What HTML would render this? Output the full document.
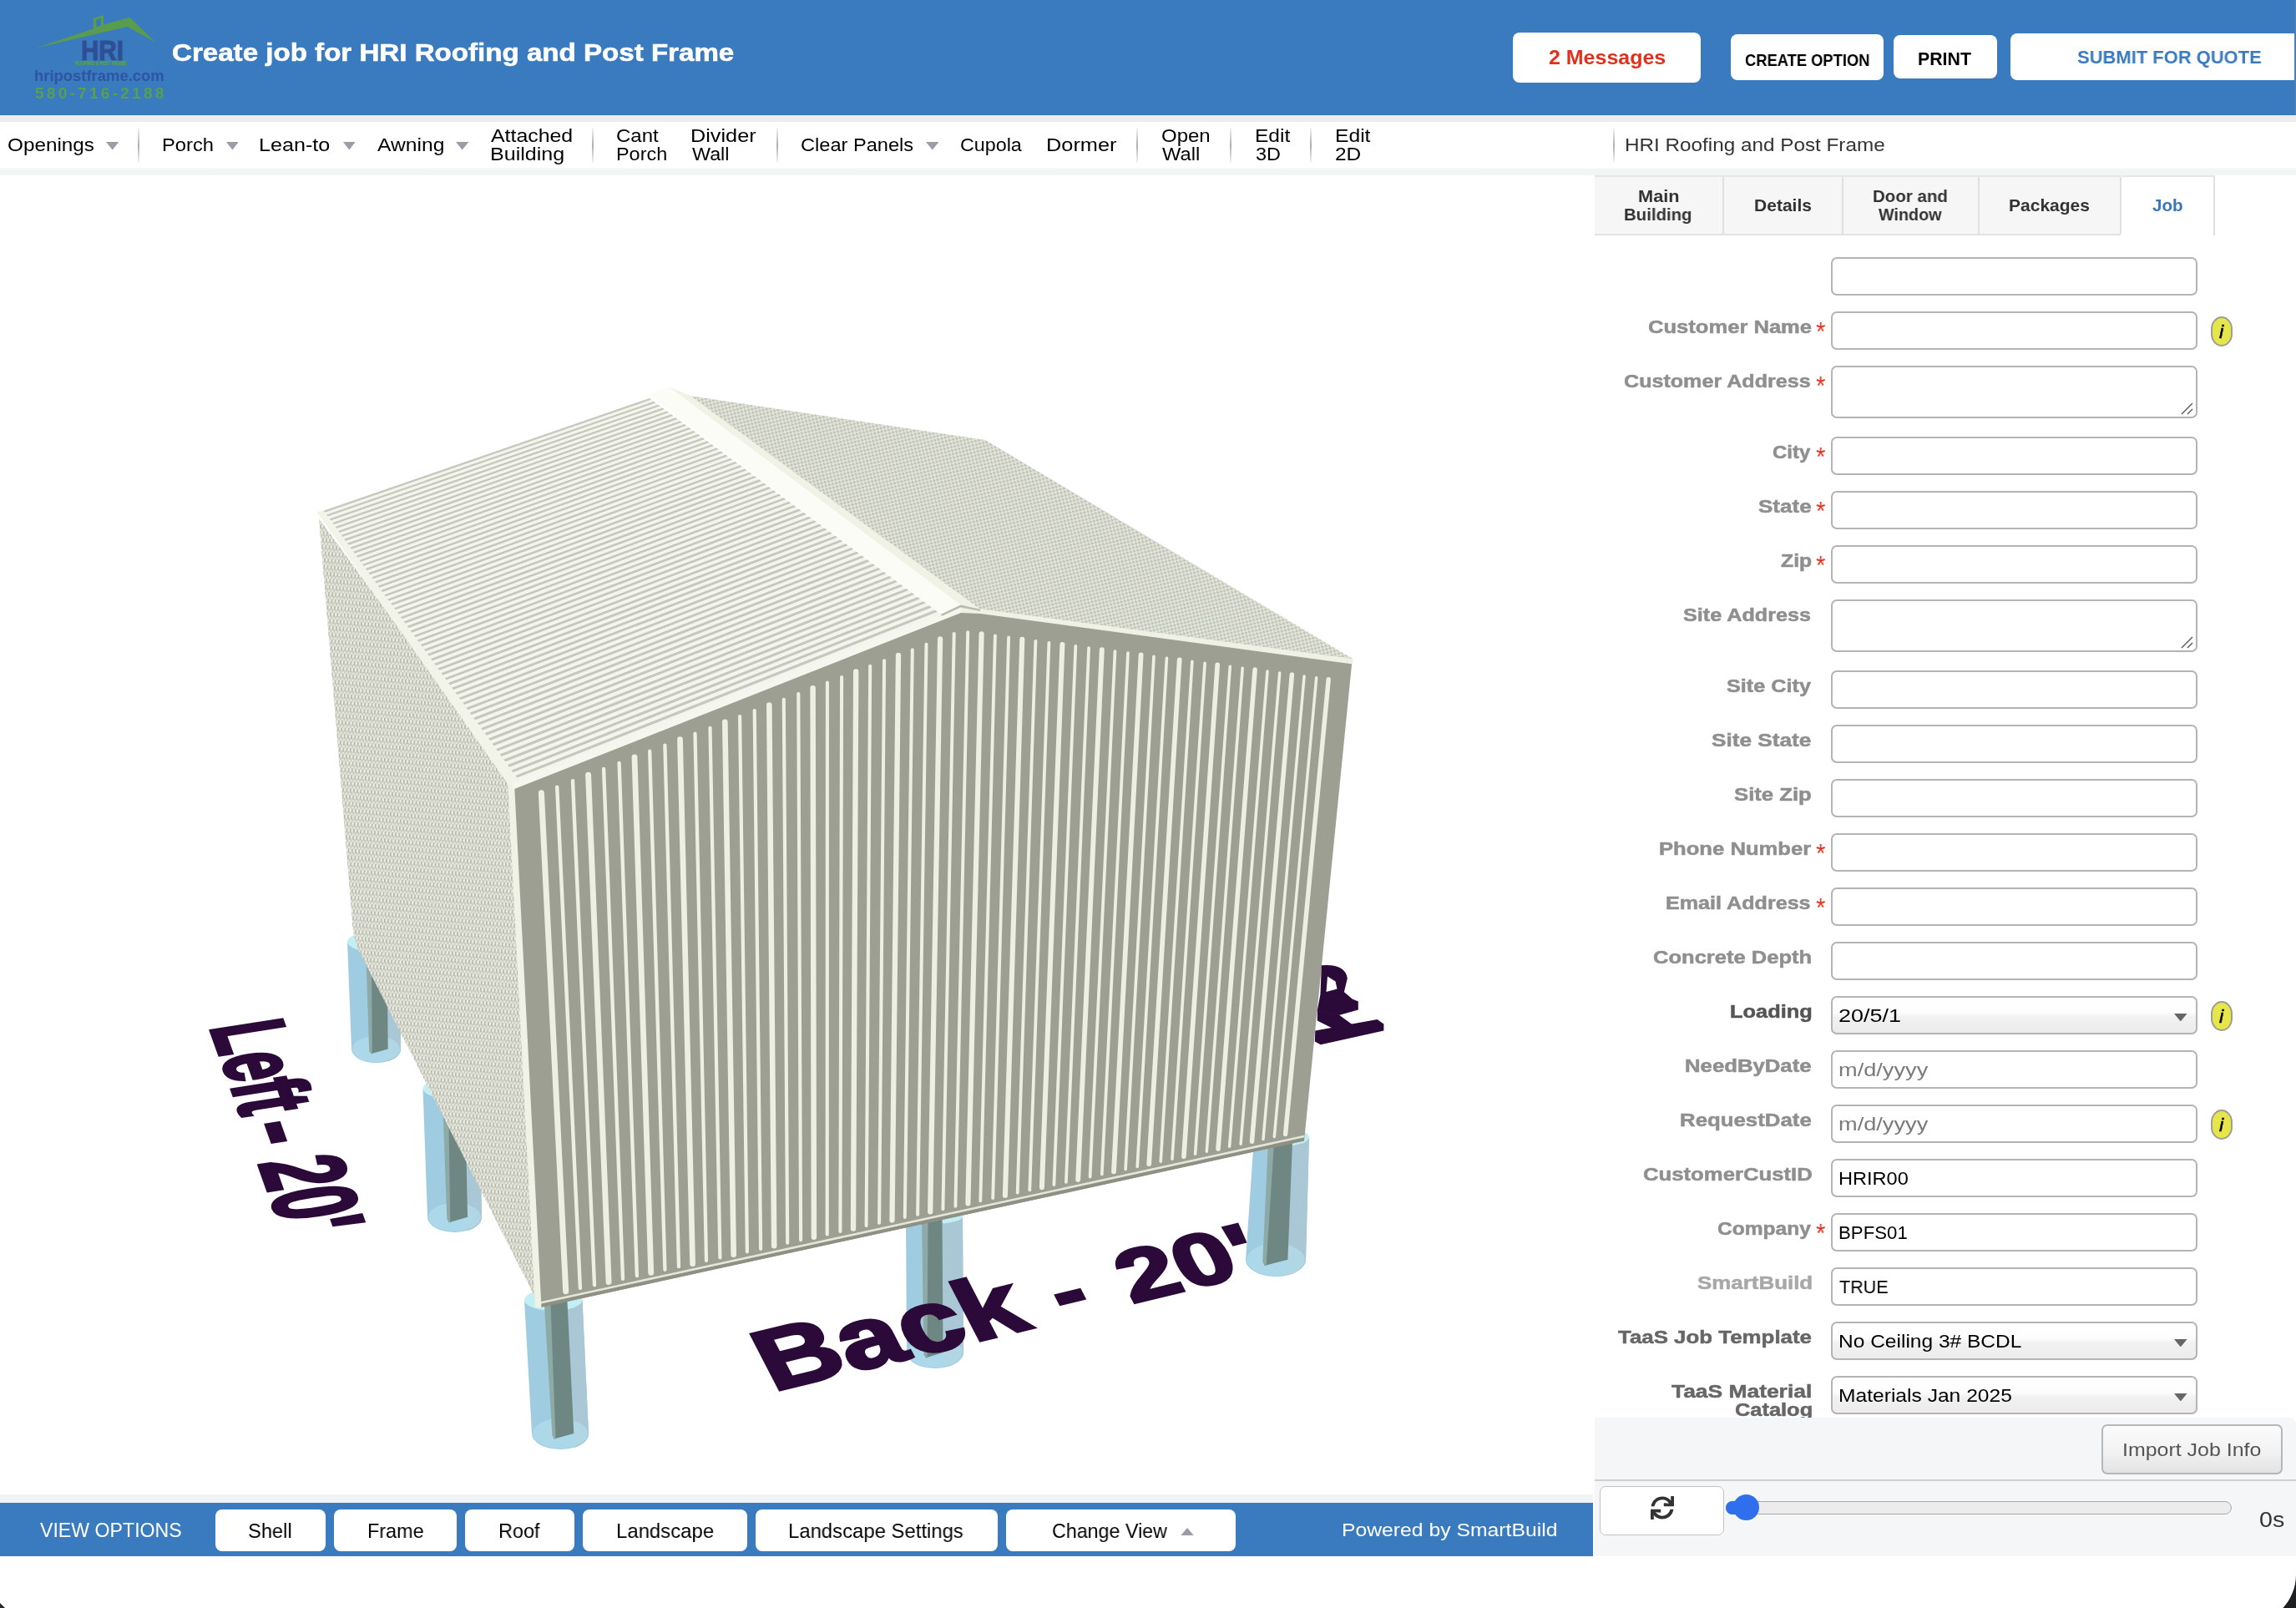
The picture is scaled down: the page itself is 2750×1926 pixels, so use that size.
<!DOCTYPE html>
<html><head><meta charset="utf-8"><title>Create job</title>
<style>
html,body{margin:0;padding:0;}
body{width:2750px;height:1926px;position:relative;overflow:hidden;background:#fff;font-family:"Liberation Sans",sans-serif;}
.t{position:absolute;white-space:pre;line-height:1;transform-origin:0 0;will-change:transform;font-family:"Liberation Sans",sans-serif;}
.inp{position:absolute;box-sizing:border-box;border:2px solid #b4b4b4;border-radius:7px;background:#fff;}
.sel{background:linear-gradient(#ffffff 0%,#fdfdfd 42%,#f1f1f1 56%,#ececec 100%);}
.btn{position:absolute;background:#fff;border-radius:8px;}
.sep{position:absolute;width:2px;top:153px;height:42px;background:linear-gradient(rgba(120,120,120,0.08),rgba(120,120,120,0.6) 50%,rgba(120,120,120,0.08));}
.info{position:absolute;box-sizing:border-box;width:26px;height:36px;border:2px solid #9e9e92;border-radius:13px/15px;background:#e6e64a;}
</style></head><body>
<div style="position:absolute;left:0px;top:0px;width:2750px;height:138px;background:#3a7abf"></div>
<div style="position:absolute;left:2748px;top:0px;width:2px;height:138px;background:#4a7fb8"></div>
<svg style="position:absolute;left:0;top:0" width="210" height="138" viewBox="0 0 210 138">
<path d="M43,57.6 L111.6,34.6 L111.6,21.8 L124,18.3 L124,29.4 L155.4,20.8 L186,50.6 L152.5,32 Z M115.2,23.4 L121,21.8 L121,30.4 L115.2,32.4 Z" fill="#5a9c4d" fill-rule="evenodd"/>
</svg>
<span class="t" style="left:96.51px;top:43.56px;font-size:33px;color:#2f4e93;font-weight:bold;-webkit-text-stroke:1px #2f4e93;transform:scaleX(0.8963);">HRI</span>
<span class="t" style="left:90.25px;top:71.87px;font-size:7.6px;color:#55a04e;font-weight:bold;-webkit-text-stroke:0.5px #55a04e;transform:scaleX(0.6483);">ROOFING &amp; POST FRAME</span>
<span class="t" style="left:41.18px;top:82.16px;font-size:18px;color:#2e55a0;font-weight:bold;transform:scaleX(1.0238);">hripostframe.com</span>
<span class="t" style="left:41.80px;top:102.56px;font-size:18px;color:#57a04e;font-weight:bold;letter-spacing:3px;transform:scaleX(1.0642);">580-716-2188</span>
<span class="t" style="left:206.20px;top:47.80px;font-size:30px;color:#fff;font-weight:bold;-webkit-text-stroke:0.6px #fff;transform:scaleX(1.1036);">Create job for HRI Roofing and Post Frame</span>
<div class="btn" style="left:1812px;top:39px;width:225px;height:60px"></div>
<span class="t" style="left:1854.80px;top:57.04px;font-size:24.4px;color:#e0301e;font-weight:bold;transform:scaleX(1.0236);">2 Messages</span>
<div class="btn" style="left:2073px;top:41px;width:183px;height:55px"></div>
<span class="t" style="left:2090.00px;top:61.77px;font-size:20px;color:#000;font-weight:bold;transform:scaleX(0.9168);">CREATE OPTION</span>
<div class="btn" style="left:2268px;top:42px;width:124px;height:52px"></div>
<span class="t" style="left:2297.40px;top:60.67px;font-size:21.3px;color:#000;font-weight:bold;">PRINT</span>
<div class="btn" style="left:2408px;top:40px;width:340px;height:56px;border-radius:8px 0 0 8px"></div>
<span class="t" style="left:2488.40px;top:57.53px;font-size:22.4px;color:#3a7abf;font-weight:bold;transform:scaleX(0.9804);">SUBMIT FOR QUOTE</span>
<div style="position:absolute;left:0px;top:138px;width:2750px;height:8px;background:#ededed"></div>
<div style="position:absolute;left:0px;top:146px;width:2750px;height:56px;background:#fff"></div>
<div style="position:absolute;left:0px;top:201px;width:2750px;height:9px;background:linear-gradient(#fbfbfb,#f3f4f4 25%,#f3f4f4)"></div>
<span class="t" style="left:8.90px;top:163.17px;font-size:22px;color:#000;transform:scaleX(1.1033);">Openings</span>
<svg style="position:absolute;left:127.4px;top:170.2px" width="15.3" height="9.6"><polygon points="0,0 15.3,0 7.65,9.6" fill="#9a9ca6"/></svg>
<span class="t" style="left:193.92px;top:163.17px;font-size:22px;color:#000;transform:scaleX(1.0790);">Porch</span>
<svg style="position:absolute;left:270.7px;top:170.2px" width="14.7" height="9.6"><polygon points="0,0 14.7,0 7.35,9.6" fill="#9a9ca6"/></svg>
<span class="t" style="left:310.46px;top:163.17px;font-size:22px;color:#000;transform:scaleX(1.1420);">Lean-to</span>
<svg style="position:absolute;left:410.7px;top:170.2px" width="14.6" height="9.6"><polygon points="0,0 14.6,0 7.3,9.6" fill="#9a9ca6"/></svg>
<span class="t" style="left:451.50px;top:163.17px;font-size:22px;color:#000;transform:scaleX(1.1202);">Awning</span>
<svg style="position:absolute;left:545.7px;top:170.2px" width="15.3" height="9.6"><polygon points="0,0 15.3,0 7.65,9.6" fill="#9a9ca6"/></svg>
<span class="t" style="left:587.80px;top:151.87px;font-size:22px;color:#000;transform:scaleX(1.1296);">Attached</span>
<span class="t" style="left:586.66px;top:174.37px;font-size:22px;color:#000;transform:scaleX(1.1401);">Building</span>
<span class="t" style="left:738.41px;top:151.87px;font-size:22px;color:#000;transform:scaleX(1.0913);">Cant</span>
<span class="t" style="left:738.44px;top:174.37px;font-size:22px;color:#000;transform:scaleX(1.0645);">Porch</span>
<span class="t" style="left:827.35px;top:151.87px;font-size:22px;color:#000;transform:scaleX(1.1485);">Divider</span>
<span class="t" style="left:828.50px;top:174.37px;font-size:22px;color:#000;transform:scaleX(1.0591);">Wall</span>
<span class="t" style="left:958.83px;top:163.17px;font-size:22px;color:#000;transform:scaleX(1.0732);">Clear Panels</span>
<svg style="position:absolute;left:1109px;top:170.2px" width="15.5" height="9.6"><polygon points="0,0 15.5,0 7.75,9.6" fill="#9a9ca6"/></svg>
<span class="t" style="left:1149.94px;top:163.17px;font-size:22px;color:#000;transform:scaleX(1.0578);">Cupola</span>
<span class="t" style="left:1253.25px;top:163.17px;font-size:22px;color:#000;transform:scaleX(1.1512);">Dormer</span>
<span class="t" style="left:1390.71px;top:151.87px;font-size:22px;color:#000;transform:scaleX(1.0895);">Open</span>
<span class="t" style="left:1391.80px;top:174.37px;font-size:22px;color:#000;transform:scaleX(1.0762);">Wall</span>
<span class="t" style="left:1502.89px;top:151.87px;font-size:22px;color:#000;transform:scaleX(1.1142);">Edit</span>
<span class="t" style="left:1504.00px;top:174.37px;font-size:22px;color:#000;transform:scaleX(1.0648);">3D</span>
<span class="t" style="left:1598.68px;top:151.87px;font-size:22px;color:#000;transform:scaleX(1.1197);">Edit</span>
<span class="t" style="left:1598.69px;top:174.37px;font-size:22px;color:#000;transform:scaleX(1.1130);">2D</span>
<div class="sep" style="left:165px"></div>
<div class="sep" style="left:709px"></div>
<div class="sep" style="left:930px"></div>
<div class="sep" style="left:1361px"></div>
<div class="sep" style="left:1473px"></div>
<div class="sep" style="left:1569px"></div>
<div class="sep" style="left:1932px"></div>
<span class="t" style="left:1945.60px;top:163.17px;font-size:22px;color:#333;transform:scaleX(1.1034);">HRI Roofing and Post Frame</span>
<svg style="position:absolute;left:0;top:210px" width="1908" height="1580" viewBox="0 210 1908 1580">
<defs>
<pattern id="pRoofR" width="6" height="6" patternUnits="userSpaceOnUse" patternTransform="rotate(31)"><rect width="6" height="6" fill="#e1e4d9"/><rect x="0" y="0" width="3" height="2.4" fill="#bfc2b5"/><rect x="3" y="3" width="3" height="2.4" fill="#bfc2b5"/></pattern>
<pattern id="pWallL" width="4.2" height="8" patternUnits="userSpaceOnUse" patternTransform="rotate(5)"><rect width="4.2" height="8" fill="#e7e8de"/><rect x="0" y="0" width="1.5" height="5.4" fill="#b4b6a9"/><rect x="2.1" y="4" width="1.4" height="4" fill="#c0c2b5"/></pattern>
</defs>
<path d="M416.0,1128.0 L421.0,1256.5 A29.5,16.5 0 0 0 480.0,1256.5 L480.0,1128.0 Z" fill="#a0cce2"/>
<path d="M463.4,1128.0 L464.7,1271.3 A29.5,16.5 0 0 0 480.0,1256.5 L480.0,1128.0 Z" fill="#aac7d5"/>
<ellipse cx="450.5" cy="1256.5" rx="28.5" ry="15.5" fill="#b6e2f0" opacity="0.55"/>
<ellipse cx="448.5" cy="1128.0" rx="32.5" ry="12.0" fill="#c2eff3"/>
<polygon points="439.0,1128.0 444.0,1262.3 464.7,1256.5 463.4,1128.0" fill="#6f8783"/>
<polygon points="437.8,1128.0 442.2,1259.0 445.8,1263.1 444.8,1128.0" fill="#8eaaa6"/>
<path d="M506.5,1304.0 L512.0,1457.8 A32.5,18.2 0 0 0 577.0,1457.8 L574.0,1304.0 Z" fill="#a0cce2"/>
<path d="M556.5,1304.0 L560.1,1474.2 A32.5,18.2 0 0 0 577.0,1457.8 L574.0,1304.0 Z" fill="#aac7d5"/>
<ellipse cx="544.5" cy="1457.8" rx="31.5" ry="17.2" fill="#b6e2f0" opacity="0.55"/>
<ellipse cx="540.2" cy="1304.0" rx="33.8" ry="12.0" fill="#c2eff3"/>
<polygon points="530.8,1304.0 537.4,1464.2 560.1,1457.8 556.5,1304.0" fill="#6f8783"/>
<polygon points="529.5,1304.0 535.4,1460.5 539.3,1465.1 536.9,1304.0" fill="#8eaaa6"/>
<path d="M628.0,1557.0 L637.0,1717.0 A34.0,19.0 0 0 0 705.0,1717.0 L697.5,1557.0 Z" fill="#a0cce2"/>
<path d="M679.4,1557.0 L687.3,1734.1 A34.0,19.0 0 0 0 705.0,1717.0 L697.5,1557.0 Z" fill="#aac7d5"/>
<ellipse cx="671.0" cy="1717.0" rx="33.0" ry="18.0" fill="#b6e2f0" opacity="0.55"/>
<ellipse cx="662.7" cy="1557.0" rx="34.7" ry="13.0" fill="#c2eff3"/>
<polygon points="653.0,1557.0 663.5,1723.6 687.3,1717.0 679.4,1557.0" fill="#6f8783"/>
<polygon points="651.6,1557.0 661.5,1719.8 665.6,1724.6 659.3,1557.0" fill="#8eaaa6"/>
<path d="M1085.0,1457.0 L1086.0,1620.0 A34.0,19.0 0 0 0 1154.0,1620.0 L1153.0,1457.0 Z" fill="#a0cce2"/>
<path d="M1128.5,1457.0 L1129.5,1637.1 A34.0,19.0 0 0 0 1154.0,1620.0 L1153.0,1457.0 Z" fill="#aac7d5"/>
<ellipse cx="1120.0" cy="1620.0" rx="33.0" ry="18.0" fill="#b6e2f0" opacity="0.55"/>
<ellipse cx="1119.0" cy="1457.0" rx="34.0" ry="9.0" fill="#c2eff3"/>
<polygon points="1105.4,1457.0 1108.4,1626.6 1129.5,1620.0 1128.5,1457.0" fill="#6f8783"/>
<polygon points="1104.0,1457.0 1106.4,1622.8 1110.5,1627.6 1111.5,1457.0" fill="#8eaaa6"/>
<path d="M1502.0,1362.0 L1492.0,1508.8 A36.0,20.2 0 0 0 1564.0,1508.8 L1568.0,1362.0 Z" fill="#a0cce2"/>
<path d="M1548.2,1362.0 L1542.4,1527.0 A36.0,20.2 0 0 0 1564.0,1508.8 L1568.0,1362.0 Z" fill="#aac7d5"/>
<ellipse cx="1528.0" cy="1508.8" rx="35.0" ry="19.2" fill="#b6e2f0" opacity="0.55"/>
<ellipse cx="1535.0" cy="1362.0" rx="33.0" ry="11.0" fill="#c2eff3"/>
<polygon points="1520.5,1362.0 1514.3,1515.9 1542.4,1508.8 1548.2,1362.0" fill="#6f8783"/>
<polygon points="1519.2,1362.0 1512.2,1511.9 1516.5,1516.9 1526.4,1362.0" fill="#8eaaa6"/>
<polygon points="382.0,621.0 615.0,940.0 647.0,1566.0 428.0,1135.0 423.0,1117.0" fill="url(#pWallL)"/>
<polygon points="613.0,938.0 1128.0,737.0 1151.0,730.0 1174.0,730.0 1619.5,791.0 1562.0,1366.5 647.0,1566.0" fill="#9c9f91"/>
<g stroke="#ecefe2" fill="none" stroke-linecap="round"><path d="M648.4,949.8 L677.7,1546.7" stroke-width="7.02"/><path d="M667.2,942.6 L694.9,1542.9" stroke-width="4.43"/><path d="M686.0,935.3 L712.0,1539.2" stroke-width="4.41"/><path d="M704.6,928.1 L729.1,1535.5" stroke-width="6.93"/><path d="M723.1,921.0 L746.0,1531.8" stroke-width="4.37"/><path d="M741.6,913.9 L762.9,1528.1" stroke-width="4.35"/><path d="M760.0,906.8 L779.7,1524.4" stroke-width="6.84"/><path d="M778.2,899.7 L796.4,1520.8" stroke-width="4.31"/><path d="M796.4,892.7 L813.0,1517.2" stroke-width="4.29"/><path d="M814.5,885.7 L829.6,1513.6" stroke-width="6.74"/><path d="M832.5,878.7 L846.0,1510.0" stroke-width="4.25"/><path d="M850.5,871.8 L862.4,1506.4" stroke-width="4.23"/><path d="M868.3,864.9 L878.7,1502.8" stroke-width="6.65"/><path d="M886.1,858.1 L894.9,1499.3" stroke-width="4.20"/><path d="M903.7,851.2 L911.1,1495.8" stroke-width="4.18"/><path d="M921.3,844.5 L927.2,1492.2" stroke-width="6.57"/><path d="M938.8,837.7 L943.2,1488.8" stroke-width="4.14"/><path d="M956.3,831.0 L959.1,1485.3" stroke-width="4.12"/><path d="M973.6,824.3 L974.9,1481.8" stroke-width="6.48"/><path d="M990.9,817.6 L990.7,1478.4" stroke-width="4.08"/><path d="M1008.1,811.0 L1006.4,1474.9" stroke-width="4.07"/><path d="M1025.2,804.4 L1022.0,1471.5" stroke-width="6.39"/><path d="M1042.2,797.8 L1037.6,1468.1" stroke-width="4.03"/><path d="M1059.1,791.3 L1053.1,1464.8" stroke-width="4.01"/><path d="M1076.0,784.8 L1068.5,1461.4" stroke-width="6.31"/><path d="M1092.8,778.3 L1083.8,1458.0" stroke-width="3.98"/><path d="M1109.5,771.8 L1099.1,1454.7" stroke-width="3.96"/><path d="M1126.1,765.4 L1114.2,1451.4" stroke-width="6.22"/><path d="M1142.7,759.0 L1129.4,1448.1" stroke-width="3.92"/><path d="M1159.2,757.1 L1144.4,1444.8" stroke-width="3.91"/><path d="M1175.6,759.3 L1159.4,1441.5" stroke-width="6.14"/><path d="M1191.9,761.4 L1174.3,1438.3" stroke-width="3.87"/><path d="M1208.1,763.5 L1189.2,1435.0" stroke-width="3.85"/><path d="M1224.3,765.7 L1203.9,1431.8" stroke-width="6.06"/><path d="M1240.4,767.8 L1218.7,1428.6" stroke-width="3.82"/><path d="M1256.4,769.9 L1233.3,1425.4" stroke-width="3.80"/><path d="M1272.4,771.9 L1247.9,1422.2" stroke-width="5.98"/><path d="M1288.3,774.0 L1262.4,1419.1" stroke-width="3.77"/><path d="M1304.1,776.1 L1276.9,1415.9" stroke-width="3.75"/><path d="M1319.8,778.1 L1291.2,1412.8" stroke-width="5.90"/><path d="M1335.5,780.2 L1305.6,1409.6" stroke-width="3.72"/><path d="M1351.0,782.2 L1319.8,1406.5" stroke-width="3.70"/><path d="M1366.6,784.3 L1334.0,1403.4" stroke-width="5.82"/><path d="M1382.0,786.3 L1348.1,1400.3" stroke-width="3.67"/><path d="M1397.4,788.3 L1362.2,1397.3" stroke-width="3.65"/><path d="M1412.7,790.3 L1376.2,1394.2" stroke-width="5.74"/><path d="M1427.9,792.3 L1390.2,1391.2" stroke-width="3.62"/><path d="M1443.1,794.3 L1404.0,1388.1" stroke-width="3.60"/><path d="M1458.2,796.3 L1417.9,1385.1" stroke-width="5.67"/><path d="M1473.3,798.2 L1431.6,1382.1" stroke-width="3.57"/><path d="M1488.2,800.2 L1445.3,1379.1" stroke-width="3.56"/><path d="M1503.1,802.1 L1459.0,1376.2" stroke-width="5.59"/><path d="M1518.0,804.1 L1472.6,1373.2" stroke-width="3.52"/><path d="M1532.7,806.0 L1486.1,1370.2" stroke-width="3.51"/><path d="M1547.4,808.0 L1499.5,1367.3" stroke-width="5.52"/><path d="M1562.1,809.9 L1513.0,1364.4" stroke-width="3.48"/><path d="M1576.7,811.8 L1526.3,1361.5" stroke-width="3.46"/><path d="M1591.2,813.7 L1539.6,1358.6" stroke-width="5.44"/></g>
<polygon points="647,1561.5 1562,1362 1562,1366.5 647,1566" fill="#8d9083"/>
<path d="M647,1560.5 L1562,1361" stroke="#e4e6d8" stroke-width="2.6"/>
<polygon points="608.0,934.0 616.0,938.0 648.5,1566.0 641.0,1566.0" fill="#f0f2e6"/>
<polygon points="609.0,931.0 1127.0,733.0 1151.0,728.0 1151.0,734.0 616.0,945.0" fill="#f5f6ee"/>
<polygon points="1151.0,728.0 1174.0,728.0 1620.5,788.0 1620.5,795.5 1174.0,735.0 1151.0,734.0" fill="#eff1e5"/>
<polygon points="826.0,474.0 1180.0,527.0 1620.0,789.0 1172.0,729.0" fill="url(#pRoofR)"/>
<polygon points="380.4,614.3 778.0,477.0 1127.0,735.7 614.6,938.4" fill="#f4f5ee"/>
<path d="M611.9,934.6 L1122.9,732.7 L1120.0,730.5 L609.9,931.9 Z M607.2,928.1 L1115.9,727.5 L1113.0,725.3 L605.2,925.4 Z M602.5,921.7 L1109.0,722.3 L1106.1,720.2 L600.6,919.0 Z M597.9,915.2 L1102.1,717.2 L1099.2,715.1 L595.9,912.6 Z M593.2,908.9 L1095.2,712.1 L1092.3,710.0 L591.3,906.2 Z M588.7,902.5 L1088.3,707.0 L1085.5,704.9 L586.7,899.9 Z M584.1,896.2 L1081.6,702.0 L1078.7,699.9 L582.2,893.6 Z M579.6,889.9 L1074.8,697.0 L1072.0,694.9 L577.7,887.3 Z M575.1,883.7 L1068.1,692.0 L1065.3,689.9 L573.2,881.1 Z M570.6,877.5 L1061.4,687.1 L1058.6,685.0 L568.7,874.9 Z M566.1,871.3 L1054.8,682.1 L1052.0,680.1 L564.3,868.7 Z M561.7,865.2 L1048.2,677.3 L1045.4,675.2 L559.8,862.6 Z M557.3,859.1 L1041.6,672.4 L1038.8,670.3 L555.4,856.5 Z M552.9,853.0 L1035.1,667.5 L1032.3,665.5 L551.1,850.5 Z M548.5,847.0 L1028.6,662.7 L1025.8,660.7 L546.7,844.5 Z M544.2,841.0 L1022.1,657.9 L1019.4,655.9 L542.4,838.5 Z M539.9,835.0 L1015.7,653.2 L1013.0,651.2 L538.1,832.5 Z M535.6,829.1 L1009.3,648.5 L1006.6,646.5 L533.8,826.6 Z M531.4,823.2 L1002.9,643.7 L1000.3,641.8 L529.6,820.7 Z M527.1,817.3 L996.6,639.1 L994.0,637.1 L525.3,814.9 Z M522.9,811.5 L990.4,634.4 L987.7,632.5 L521.1,809.1 Z M518.7,805.7 L984.1,629.8 L981.5,627.8 L517.0,803.3 Z M514.5,799.9 L977.9,625.2 L975.3,623.3 L512.8,797.5 Z M510.4,794.2 L971.7,620.6 L969.1,618.7 L508.7,791.8 Z M506.3,788.5 L965.6,616.0 L963.0,614.1 L504.6,786.1 Z M502.2,782.8 L959.5,611.5 L956.9,609.6 L500.5,780.5 Z M498.1,777.2 L953.4,607.0 L950.9,605.1 L496.4,774.8 Z M494.0,771.6 L947.4,602.5 L944.8,600.7 L492.4,769.2 Z M490.0,766.0 L941.3,598.1 L938.8,596.2 L488.3,763.7 Z M486.0,760.4 L935.4,593.6 L932.9,591.8 L484.3,758.1 Z M482.0,754.9 L929.4,589.2 L926.9,587.4 L480.3,752.6 Z M478.0,749.4 L923.5,584.9 L921.0,583.0 L476.4,747.1 Z M474.1,744.0 L917.6,580.5 L915.2,578.7 L472.4,741.7 Z M470.2,738.5 L911.8,576.2 L909.3,574.3 L468.5,736.3 Z M466.3,733.1 L906.0,571.8 L903.5,570.0 L464.6,730.9 Z M462.4,727.8 L900.2,567.6 L897.7,565.8 L460.8,725.5 Z M458.5,722.4 L894.4,563.3 L892.0,561.5 L456.9,720.2 Z M454.7,717.1 L888.7,559.0 L886.3,557.3 L453.1,714.9 Z M450.9,711.8 L883.0,554.8 L880.6,553.1 L449.3,709.6 Z M447.0,706.5 L877.3,550.6 L874.9,548.9 L445.5,704.3 Z M443.3,701.3 L871.7,546.4 L869.3,544.7 L441.7,699.1 Z M439.5,696.1 L866.1,542.3 L863.7,540.5 L437.9,693.9 Z M435.8,690.9 L860.5,538.1 L858.2,536.4 L434.2,688.7 Z M432.0,685.8 L854.9,534.0 L852.6,532.3 L430.5,683.6 Z M428.3,680.6 L849.4,529.9 L847.1,528.2 L426.8,678.5 Z M424.6,675.5 L843.9,525.9 L841.6,524.2 L423.1,673.4 Z M421.0,670.4 L838.5,521.8 L836.2,520.1 L419.4,668.3 Z M417.3,665.4 L833.0,517.8 L830.8,516.1 L415.8,663.3 Z M413.7,660.4 L827.6,513.8 L825.4,512.1 L412.2,658.3 Z M410.1,655.4 L822.2,509.8 L820.0,508.1 L408.6,653.3 Z M406.5,650.4 L816.9,505.8 L814.6,504.2 L405.0,648.3 Z M402.9,645.5 L811.6,501.9 L809.3,500.2 L401.4,643.4 Z M399.4,640.5 L806.3,497.9 L804.0,496.3 L397.9,638.5 Z M395.8,635.6 L801.0,494.0 L798.8,492.4 L394.3,633.6 Z M392.3,630.8 L795.7,490.2 L793.5,488.5 L390.8,628.7 Z M388.8,625.9 L790.5,486.3 L788.3,484.7 L387.3,623.9 Z M385.3,621.1 L785.3,482.4 L783.2,480.8 L383.9,619.1 Z M381.9,616.3 L780.2,478.6 L778.0,477.0 L380.4,614.3 Z" fill="#c5c8bb"/>
<polygon points="379.5,613.0 388.0,612.0 621.0,934.0 609.0,940.0" fill="#f2f3e9"/>
<polygon points="776.0,472.0 802.0,464.0 1150.6,724.4 1127.0,735.7" fill="#fbfcf5"/>
<polygon points="802.0,464.0 827.0,474.0 1174.0,729.7 1150.6,724.4" fill="#f0f2e5"/>
<polygon points="1127.0,735.7 1150.6,724.4 1174.0,729.7 1174.0,732.0 1150.6,727.5 1128.0,738.0" fill="#b9bcad"/>
<g fill="#2b0a3a" stroke="#2b0a3a" font-family="Liberation Sans, sans-serif" font-weight="bold">
<g transform="matrix(0.971,-0.238,0.46,0.888,925.7,1666.8)" stroke-width="3.5">
<text x="0" y="0" font-size="109" textLength="322" lengthAdjust="spacingAndGlyphs">Back</text>
<text x="360" y="0" font-size="100" textLength="38" lengthAdjust="spacingAndGlyphs">-</text>
<text x="443" y="0" font-size="93" textLength="166" lengthAdjust="spacingAndGlyphs">20'</text>
</g>
<g transform="matrix(0.336,0.942,-0.988,0.154,251.5,1230)" stroke-width="5">
<text x="0" y="0" font-size="124" textLength="115" lengthAdjust="spacingAndGlyphs">Left</text>
<text x="125" y="0" font-size="124" textLength="29" lengthAdjust="spacingAndGlyphs">-</text>
<text x="173" y="0" font-size="140" textLength="94" lengthAdjust="spacingAndGlyphs">20'</text>
</g></g>
<g fill="#2b0a3a">
<path fill-rule="evenodd" d="M1582.8,1156.3 Q1611,1154 1613.8,1171.7 L1609.7,1189 L1581.5,1190 Z M1590,1169.5 L1599.5,1175.5 L1601.5,1184.5 L1588.5,1188 Z"/>
<polygon points="1581.8,1189.0 1609.7,1188.0 1619.6,1196.6 1626.8,1199.6 1626.8,1209.6 1603.7,1216.0 1577.8,1210.0"/>
<polygon points="1577.8,1209.5 1603.7,1215.5 1621.6,1228.5 1609.7,1237.4 1595.7,1231.4 1577.8,1222.5"/>
<polygon points="1575.3,1234.4 1649.5,1221.0 1657.4,1226.5 1657.4,1234.4 1581.8,1251.3 1574.8,1247.4"/>
</g>
</svg>
<div style="position:absolute;left:1910px;top:210px;width:840px;height:1488px;background:#fff;border-radius:0 8px 0 0"></div>
<div style="position:absolute;left:1910px;top:210px;width:630px;height:72px;background:#f6f6f6;border-top:2px solid #e6e6e6;border-bottom:2px solid #e2e2e2;box-sizing:border-box"></div>
<div style="position:absolute;left:2063px;top:212px;width:2px;height:68px;background:#e0e0e0"></div>
<div style="position:absolute;left:2206px;top:212px;width:2px;height:68px;background:#e0e0e0"></div>
<div style="position:absolute;left:2369px;top:212px;width:2px;height:68px;background:#e0e0e0"></div>
<div style="position:absolute;left:2539px;top:212px;width:2px;height:68px;background:#e0e0e0"></div>
<div style="position:absolute;left:2541px;top:210px;width:112px;height:72px;background:#fff;border-top:2px solid #e6e6e6;border-right:2px solid #e0e0e0;box-sizing:border-box"></div>
<span class="t" style="left:1961.64px;top:225.06px;font-size:20.6px;color:#333;font-weight:bold;transform:scaleX(1.0567);">Main</span>
<span class="t" style="left:1945.41px;top:247.26px;font-size:20.6px;color:#333;font-weight:bold;transform:scaleX(0.9892);">Building</span>
<span class="t" style="left:2100.88px;top:236.26px;font-size:20.6px;color:#333;font-weight:bold;transform:scaleX(1.0215);">Details</span>
<span class="t" style="left:2243.01px;top:225.06px;font-size:20.6px;color:#333;font-weight:bold;transform:scaleX(0.9944);">Door and</span>
<span class="t" style="left:2250.00px;top:247.26px;font-size:20.6px;color:#333;font-weight:bold;transform:scaleX(0.9584);">Window</span>
<span class="t" style="left:2406.48px;top:236.16px;font-size:20.6px;color:#333;font-weight:bold;transform:scaleX(1.0205);">Packages</span>
<span class="t" style="left:2578.20px;top:236.16px;font-size:20.6px;color:#3a76ba;font-weight:bold;transform:scaleX(0.9935);">Job</span>
<div class="inp" style="left:2192.5px;top:308.3px;width:439px;height:46px"></div>
<div class="inp" style="left:2192.5px;top:373.3px;width:439px;height:46px"></div>
<span class="t" style="left:1973.55px;top:381.07px;font-size:22px;color:#8f8f8f;font-weight:bold;-webkit-text-stroke:0.5px #8f8f8f;transform:scaleX(1.1621);">Customer Name</span>
<span class="t" style="left:2175.40px;top:381.41px;font-size:32px;color:#e0301e;transform:scaleX(0.9167);">*</span>
<div class="info" style="left:2648px;top:379.1px"></div>
<span class="t" style="left:2658.45px;top:386.87px;font-size:22px;color:#000;font-style:italic;-webkit-text-stroke:0.5px #000;transform:scaleX(1.0833);">i</span>
<div class="inp" style="left:2192.5px;top:438.3px;width:439px;height:63px"></div>
<span class="t" style="left:1945.05px;top:446.07px;font-size:22px;color:#8f8f8f;font-weight:bold;-webkit-text-stroke:0.5px #8f8f8f;transform:scaleX(1.1409);">Customer Address</span>
<span class="t" style="left:2175.40px;top:446.41px;font-size:32px;color:#e0301e;transform:scaleX(0.9167);">*</span>
<svg style="position:absolute;left:2609.5px;top:480.3px" width="18" height="18"><path d="M3,16 L16,3 M10,16 L16,10" stroke="#555" stroke-width="1.4" fill="none"/></svg>
<div class="inp" style="left:2192.5px;top:523.3px;width:439px;height:46px"></div>
<span class="t" style="left:2123.25px;top:531.07px;font-size:22px;color:#8f8f8f;font-weight:bold;-webkit-text-stroke:0.5px #8f8f8f;transform:scaleX(1.0892);">City</span>
<span class="t" style="left:2175.40px;top:531.41px;font-size:32px;color:#e0301e;transform:scaleX(0.9167);">*</span>
<div class="inp" style="left:2192.5px;top:588.3px;width:439px;height:46px"></div>
<span class="t" style="left:2105.95px;top:596.07px;font-size:22px;color:#8f8f8f;font-weight:bold;-webkit-text-stroke:0.5px #8f8f8f;transform:scaleX(1.1837);">State</span>
<span class="t" style="left:2175.40px;top:596.41px;font-size:32px;color:#e0301e;transform:scaleX(0.9167);">*</span>
<div class="inp" style="left:2192.5px;top:653.3px;width:439px;height:46px"></div>
<span class="t" style="left:2132.65px;top:661.07px;font-size:22px;color:#8f8f8f;font-weight:bold;-webkit-text-stroke:0.5px #8f8f8f;transform:scaleX(1.1275);">Zip</span>
<span class="t" style="left:2175.40px;top:661.41px;font-size:32px;color:#e0301e;transform:scaleX(0.9167);">*</span>
<div class="inp" style="left:2192.5px;top:718.3px;width:439px;height:63px"></div>
<span class="t" style="left:2015.65px;top:726.07px;font-size:22px;color:#8f8f8f;font-weight:bold;-webkit-text-stroke:0.5px #8f8f8f;transform:scaleX(1.1448);">Site Address</span>
<svg style="position:absolute;left:2609.5px;top:760.3px" width="18" height="18"><path d="M3,16 L16,3 M10,16 L16,10" stroke="#555" stroke-width="1.4" fill="none"/></svg>
<div class="inp" style="left:2192.5px;top:803.3px;width:439px;height:46px"></div>
<span class="t" style="left:2067.55px;top:811.07px;font-size:22px;color:#8f8f8f;font-weight:bold;-webkit-text-stroke:0.5px #8f8f8f;transform:scaleX(1.1466);">Site City</span>
<div class="inp" style="left:2192.5px;top:868.3px;width:439px;height:46px"></div>
<span class="t" style="left:2050.25px;top:876.07px;font-size:22px;color:#8f8f8f;font-weight:bold;-webkit-text-stroke:0.5px #8f8f8f;transform:scaleX(1.1907);">Site State</span>
<div class="inp" style="left:2192.5px;top:933.3px;width:439px;height:46px"></div>
<span class="t" style="left:2077.05px;top:941.07px;font-size:22px;color:#8f8f8f;font-weight:bold;-webkit-text-stroke:0.5px #8f8f8f;transform:scaleX(1.1682);">Site Zip</span>
<div class="inp" style="left:2192.5px;top:998.3px;width:439px;height:46px"></div>
<span class="t" style="left:1986.69px;top:1006.07px;font-size:22px;color:#8f8f8f;font-weight:bold;-webkit-text-stroke:0.5px #8f8f8f;transform:scaleX(1.1642);">Phone Number</span>
<span class="t" style="left:2175.40px;top:1006.41px;font-size:32px;color:#e0301e;transform:scaleX(0.9167);">*</span>
<div class="inp" style="left:2192.5px;top:1063.3px;width:439px;height:46px"></div>
<span class="t" style="left:1995.11px;top:1071.07px;font-size:22px;color:#8f8f8f;font-weight:bold;-webkit-text-stroke:0.5px #8f8f8f;transform:scaleX(1.1418);">Email Address</span>
<span class="t" style="left:2175.40px;top:1071.41px;font-size:32px;color:#e0301e;transform:scaleX(0.9167);">*</span>
<div class="inp" style="left:2192.5px;top:1128.3px;width:439px;height:46px"></div>
<span class="t" style="left:1979.75px;top:1136.07px;font-size:22px;color:#8f8f8f;font-weight:bold;-webkit-text-stroke:0.5px #8f8f8f;transform:scaleX(1.1606);">Concrete Depth</span>
<div class="inp sel" style="left:2192.5px;top:1193.3px;width:439px;height:46px"></div>
<span class="t" style="left:2072.30px;top:1201.07px;font-size:22px;color:#555;font-weight:bold;-webkit-text-stroke:0.5px #555;transform:scaleX(1.1540);">Loading</span>
<span class="t" style="left:2201.77px;top:1206.07px;font-size:22px;color:#000;transform:scaleX(1.2264);">20/5/1</span>
<svg style="position:absolute;left:2604.4px;top:1213.5px" width="15.6" height="9.4"><polygon points="0,0 15.6,0 7.8,9.4" fill="#666"/></svg>
<div class="info" style="left:2648px;top:1199.1px"></div>
<span class="t" style="left:2658.45px;top:1206.87px;font-size:22px;color:#000;font-style:italic;-webkit-text-stroke:0.5px #000;transform:scaleX(1.0833);">i</span>
<div class="inp" style="left:2192.5px;top:1258.3px;width:439px;height:46px"></div>
<span class="t" style="left:2018.08px;top:1266.07px;font-size:22px;color:#8f8f8f;font-weight:bold;-webkit-text-stroke:0.5px #8f8f8f;transform:scaleX(1.1693);">NeedByDate</span>
<span class="t" style="left:2201.76px;top:1271.07px;font-size:22px;color:#7a7a7a;transform:scaleX(1.2356);">m/d/yyyy</span>
<div class="inp" style="left:2192.5px;top:1323.3px;width:439px;height:46px"></div>
<span class="t" style="left:2011.88px;top:1331.07px;font-size:22px;color:#8f8f8f;font-weight:bold;-webkit-text-stroke:0.5px #8f8f8f;transform:scaleX(1.1730);">RequestDate</span>
<span class="t" style="left:2201.76px;top:1336.07px;font-size:22px;color:#7a7a7a;transform:scaleX(1.2356);">m/d/yyyy</span>
<div class="info" style="left:2648px;top:1329.1px"></div>
<span class="t" style="left:2658.45px;top:1336.87px;font-size:22px;color:#000;font-style:italic;-webkit-text-stroke:0.5px #000;transform:scaleX(1.0833);">i</span>
<div class="inp" style="left:2192.5px;top:1388.3px;width:439px;height:46px"></div>
<span class="t" style="left:1967.65px;top:1396.07px;font-size:22px;color:#8f8f8f;font-weight:bold;-webkit-text-stroke:0.5px #8f8f8f;transform:scaleX(1.1680);">CustomerCustID</span>
<span class="t" style="left:2201.93px;top:1401.07px;font-size:22px;color:#000;transform:scaleX(1.0700);">HRIR00</span>
<div class="inp" style="left:2192.5px;top:1453.3px;width:439px;height:46px"></div>
<span class="t" style="left:2056.55px;top:1461.07px;font-size:22px;color:#8f8f8f;font-weight:bold;-webkit-text-stroke:0.5px #8f8f8f;transform:scaleX(1.1168);">Company</span>
<span class="t" style="left:2175.40px;top:1461.41px;font-size:32px;color:#e0301e;transform:scaleX(0.9167);">*</span>
<span class="t" style="left:2201.99px;top:1466.07px;font-size:22px;color:#000;transform:scaleX(1.0100);">BPFS01</span>
<div class="inp" style="left:2192.5px;top:1518.3px;width:439px;height:46px"></div>
<span class="t" style="left:2032.85px;top:1526.07px;font-size:22px;color:#a8a8a8;font-weight:bold;-webkit-text-stroke:0.5px #a8a8a8;transform:scaleX(1.1776);">SmartBuild</span>
<span class="t" style="left:2203.00px;top:1531.07px;font-size:22px;color:#000;transform:scaleX(0.9795);">TRUE</span>
<div class="inp sel" style="left:2192.5px;top:1583.3px;width:439px;height:46px"></div>
<span class="t" style="left:1937.65px;top:1591.07px;font-size:22px;color:#666;font-weight:bold;-webkit-text-stroke:0.5px #666;transform:scaleX(1.1761);">TaaS Job Template</span>
<span class="t" style="left:2201.89px;top:1596.07px;font-size:22px;color:#000;transform:scaleX(1.1143);">No Ceiling 3# BCDL</span>
<svg style="position:absolute;left:2604.4px;top:1603.5px" width="15.6" height="9.4"><polygon points="0,0 15.6,0 7.8,9.4" fill="#666"/></svg>
<div class="inp sel" style="left:2192.5px;top:1648.3px;width:439px;height:46px"></div>
<span class="t" style="left:2002.45px;top:1656.07px;font-size:22px;color:#666;font-weight:bold;-webkit-text-stroke:0.5px #666;transform:scaleX(1.1999);">TaaS Material</span>
<span class="t" style="left:2201.88px;top:1661.07px;font-size:22px;color:#000;transform:scaleX(1.1183);">Materials Jan 2025</span>
<svg style="position:absolute;left:2604.4px;top:1668.5px" width="15.6" height="9.4"><polygon points="0,0 15.6,0 7.8,9.4" fill="#666"/></svg>
<span class="t" style="left:2077.85px;top:1678.07px;font-size:22px;color:#666;font-weight:bold;-webkit-text-stroke:0.5px #666;transform:scaleX(1.1548);">Catalog</span>
<div style="position:absolute;left:1910px;top:1698px;width:840px;height:166px;background:#f4f6f8;border-radius:0 8px 0 0"></div>
<div style="position:absolute;left:1910px;top:1772px;width:840px;height:2px;background:#cdd0d1"></div>
<div style="position:absolute;box-sizing:border-box;left:2516.8px;top:1705.8px;width:217px;height:60.2px;border:2px solid #b5b8b8;border-radius:7px;background:linear-gradient(#fbfbfb,#f1f1f1 60%,#e2e2e2)"></div>
<span class="t" style="left:2541.78px;top:1725.95px;font-size:22.5px;color:#555;transform:scaleX(1.1080);">Import Job Info</span>
<div style="position:absolute;box-sizing:border-box;left:1916.4px;top:1780.4px;width:149px;height:59px;border:1.5px solid #c2c2c2;border-radius:7px;background:#fff"></div>
<svg style="position:absolute;left:1977px;top:1792px" width="28" height="28" viewBox="0 0 512 512">
<path fill="#333" d="M440.65 12.57l4 82.77A247.16 247.16 0 0 0 255.83 8C134.73 8 33.91 94.92 12.29 209.82A12 12 0 0 0 24.09 224h49.05a12 12 0 0 0 11.67-9.26 175.91 175.91 0 0 1 317-56.94l-101.46-4.86a12 12 0 0 0-12.57 12v47.41a12 12 0 0 0 12 12H500a12 12 0 0 0 12-12V12a12 12 0 0 0-12-12h-47.37a12 12 0 0 0-11.98 12.57zM255.83 432a175.61 175.61 0 0 1-146-77.8l101.8 4.87a12 12 0 0 0 12.57-12v-47.4a12 12 0 0 0-12-12H12a12 12 0 0 0-12 12V500a12 12 0 0 0 12 12h47.35a12 12 0 0 0 12-12.6l-4.15-82.57A247.17 247.17 0 0 0 255.83 504c121.11 0 221.93-86.92 243.55-201.82a12 12 0 0 0-11.8-14.18h-49.05a12 12 0 0 0-11.67 9.26A175.86 175.86 0 0 1 255.83 432z"/></svg>
<div style="position:absolute;box-sizing:border-box;left:2067.3px;top:1798.2px;width:605.5px;height:15.4px;border:1.5px solid #a9a9a9;border-radius:8px;background:#ececec"></div>
<div style="position:absolute;left:2067.3px;top:1798.2px;width:30px;height:15.4px;border-radius:8px 0 0 8px;background:#2f6fed"></div>
<div style="position:absolute;left:2076.1px;top:1790px;width:31.4px;height:31.4px;border-radius:50%;background:#2f6fed"></div>
<span class="t" style="left:2705.68px;top:1807.71px;font-size:25.5px;color:#333;transform:scaleX(1.1199);">0s</span>
<svg style="position:absolute;left:2680px;top:1866px" width="70" height="60" viewBox="2680 1866 70 60"><path d="M2750,1886 A59,59 0 0 1 2691,1945 L2750,1945 Z" fill="#1e1f21"/></svg>
<svg style="position:absolute;left:0px;top:1916px" width="10" height="10" viewBox="0 0 10 10"><path d="M0,4 L6,10 L0,10 Z" fill="#26282a"/></svg>
<div style="position:absolute;left:0px;top:1790px;width:1908px;height:10px;background:#f1f3f4"></div>
<div style="position:absolute;left:0px;top:1800px;width:1908px;height:64px;background:#3a7abf"></div>
<span class="t" style="left:48.00px;top:1821.53px;font-size:23px;color:#fff;transform:scaleX(1.0063);">VIEW OPTIONS</span>
<div class="btn" style="left:258px;top:1808px;width:132px;height:50px"></div>
<div class="btn" style="left:400px;top:1808px;width:147px;height:50px"></div>
<div class="btn" style="left:557px;top:1808px;width:131px;height:50px"></div>
<div class="btn" style="left:698px;top:1808px;width:197px;height:50px"></div>
<div class="btn" style="left:905px;top:1808px;width:290px;height:50px"></div>
<div class="btn" style="left:1205px;top:1808px;width:275px;height:50px"></div>
<span class="t" style="left:297.42px;top:1821.91px;font-size:24.2px;color:#000;transform:scaleX(0.9784);">Shell</span>
<span class="t" style="left:439.63px;top:1821.91px;font-size:24.2px;color:#000;transform:scaleX(0.9674);">Frame</span>
<span class="t" style="left:597.23px;top:1821.91px;font-size:24.2px;color:#000;transform:scaleX(0.9688);">Roof</span>
<span class="t" style="left:737.71px;top:1821.91px;font-size:24.2px;color:#000;transform:scaleX(0.9889);">Landscape</span>
<span class="t" style="left:944.21px;top:1821.91px;font-size:24.2px;color:#000;transform:scaleX(0.9874);">Landscape Settings</span>
<span class="t" style="left:1260.44px;top:1821.91px;font-size:24.2px;color:#000;transform:scaleX(0.9611);">Change View</span>
<svg style="position:absolute;left:1413.7px;top:1829.5px" width="16.1" height="9.5"><polygon points="0,9.5 16.1,9.5 8.05,0" fill="#9a9ca6"/></svg>
<span class="t" style="left:1607.30px;top:1822.05px;font-size:22.5px;color:#fff;transform:scaleX(1.0993);">Powered by SmartBuild</span>
</body></html>
